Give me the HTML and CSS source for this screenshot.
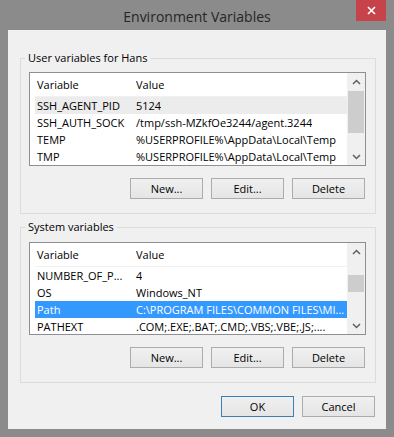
FILE: index.html
```html
<!DOCTYPE html>
<html lang="en">
<head>
    <meta charset="UTF-8">
    <title>Environment Variables</title>
    <link rel="stylesheet" href="styles.css">
</head>
<body>
    <div class="window">
        <div class="titlebar">
            <span></span>
            <span class="title">Environment Variables</span>
            <button class="close" title="Close">
                <svg width="9" height="9" viewBox="0 0 9 9">
                    <path d="M1 1 L8 8 M8 1 L1 8" stroke="#fff" stroke-width="1.6" fill="none"/>
                </svg>
            </button>
        </div>

        <div class="client">
            <fieldset class="group user">
                <legend>User variables for Hans</legend>
                <div class="list">
                    <div class="table">
                        <div class="row head"><span class="c1">Variable</span><span class="c2">Value</span></div>
                        <div class="row hover"><span class="c1">SSH_AGENT_PID</span><span class="c2">5124</span></div>
                        <div class="row"><span class="c1">SSH_AUTH_SOCK</span><span class="c2">/tmp/ssh-MZkfOe3244/agent.3244</span></div>
                        <div class="row"><span class="c1">TEMP</span><span class="c2">%USERPROFILE%\AppData\Local\Temp</span></div>
                        <div class="row"><span class="c1">TMP</span><span class="c2">%USERPROFILE%\AppData\Local\Temp</span></div>
                    </div>
                    <div class="scrollbar">
                        <div class="arrow">
                            <svg width="9" height="6" viewBox="0 0 9 6"><polyline points="1,5 4.5,1.5 8,5" stroke="#5f5f5f" stroke-width="1.5" fill="none"/></svg>
                        </div>
                        <div class="track"><div class="thumb"></div></div>
                        <div class="arrow">
                            <svg width="9" height="6" viewBox="0 0 9 6"><polyline points="1,1 4.5,4.5 8,1" stroke="#5f5f5f" stroke-width="1.5" fill="none"/></svg>
                        </div>
                    </div>
                </div>
                <div class="buttons">
                    <button class="btn">New...</button>
                    <button class="btn">Edit...</button>
                    <button class="btn">Delete</button>
                </div>
            </fieldset>

            <fieldset class="group system">
                <legend>System variables</legend>
                <div class="list">
                    <div class="table">
                        <div class="row head"><span class="c1">Variable</span><span class="c2">Value</span></div>
                        <div class="row"><span class="c1">NUMBER_OF_P...</span><span class="c2">4</span></div>
                        <div class="row"><span class="c1">OS</span><span class="c2">Windows_NT</span></div>
                        <div class="row selected"><span class="c1">Path</span><span class="c2">C:\PROGRAM FILES\COMMON FILES\MI...</span></div>
                        <div class="row"><span class="c1">PATHEXT</span><span class="c2">.COM;.EXE;.BAT;.CMD;.VBS;.VBE;.JS;....</span></div>
                    </div>
                    <div class="scrollbar">
                        <div class="arrow">
                            <svg width="9" height="6" viewBox="0 0 9 6"><polyline points="1,5 4.5,1.5 8,5" stroke="#5f5f5f" stroke-width="1.5" fill="none"/></svg>
                        </div>
                        <div class="track"><div class="thumb"></div></div>
                        <div class="arrow">
                            <svg width="9" height="6" viewBox="0 0 9 6"><polyline points="1,1 4.5,4.5 8,1" stroke="#5f5f5f" stroke-width="1.5" fill="none"/></svg>
                        </div>
                    </div>
                </div>
                <div class="buttons">
                    <button class="btn">New...</button>
                    <button class="btn">Edit...</button>
                    <button class="btn">Delete</button>
                </div>
            </fieldset>

            <div class="buttons dialog-buttons">
                <button class="btn default">OK</button>
                <button class="btn">Cancel</button>
            </div>
        </div>
    </div>
</body>
</html>
```

FILE: styles.css
```css
body {
    margin: 0;
    font-family: "Open Sans", "Noto Sans", sans-serif;
    font-size: 11px;
    color: #000;
}
.window {
    width: 394px;
    height: 437px;
    box-sizing: border-box;
    background-color: #8b8b8b;
    padding: 0 8px 8px;
    display: flex;
    flex-direction: column;
}
.titlebar {
    height: 30px;
    flex: none;
    display: grid;
    grid-template-columns: 1fr auto 1fr;
}
.title {
    align-self: center;
    padding-top: 2px;
    font-size: 14px;
    color: #262626;
}
.close {
    justify-self: end;
    align-self: start;
    width: 30px;
    height: 21px;
    padding: 0;
    border: none;
    background-color: #c7434a;
    display: flex;
    align-items: center;
    justify-content: center;
}
.client {
    flex: 1;
    background-color: #f0f0f0;
    padding: 0 10px 0 12px;
}
.group {
    margin: 20px 0 0;
    padding: 6px 9px 14px 8px;
    border: 1px solid #dcdcdc;
    min-width: 0;
}
.group.system {
    margin-top: 5px;
    padding-top: 7px;
}
.group legend {
    padding: 0 3px;
    margin-left: -4px;
    line-height: 16px;
}
.list {
    height: 94px;
    box-sizing: border-box;
    border: 1px solid #8e8f94;
    background-color: #fff;
    display: flex;
    overflow: hidden;
}
.system .list {
    height: 93px;
}
.table {
    flex: 1;
    min-width: 0;
    padding-left: 5px;
}
.row {
    display: flex;
    align-items: center;
    height: 17px;
    white-space: nowrap;
}
.row.head {
    height: 24px;
    box-sizing: border-box;
    border-bottom: 1px solid #f1f1f1;
}
.row.hover {
    background-color: #ececec;
}
.row.selected {
    background-color: #3399ff;
    color: #fff;
}
.c1 {
    width: 101px;
    flex: none;
    box-sizing: border-box;
    padding-left: 2px;
}
.c2 {
    overflow: hidden;
}
.scrollbar {
    width: 18px;
    flex: none;
    background-color: #f0f0f0;
    display: flex;
    flex-direction: column;
}
.arrow {
    height: 17px;
    flex: none;
    display: flex;
    align-items: center;
    justify-content: center;
}
.track {
    flex: 1;
}
.thumb {
    margin: 1px 1px 0 1px;
    height: 42px;
    background-color: #cdcdcd;
}
.system .thumb {
    margin-top: 15px;
    height: 17px;
}
.buttons {
    display: flex;
    justify-content: flex-end;
    gap: 8px;
    margin-top: 12px;
    padding-right: 1px;
}
.dialog-buttons {
    margin-top: 13px;
}
.btn {
    width: 73px;
    height: 21px;
    padding: 0;
    border: 1px solid #acacac;
    background: linear-gradient(#f0f0f0, #e5e5e5);
    font: inherit;
    color: #000;
}
.btn.default {
    border-color: #3c7fb1;
}
```
